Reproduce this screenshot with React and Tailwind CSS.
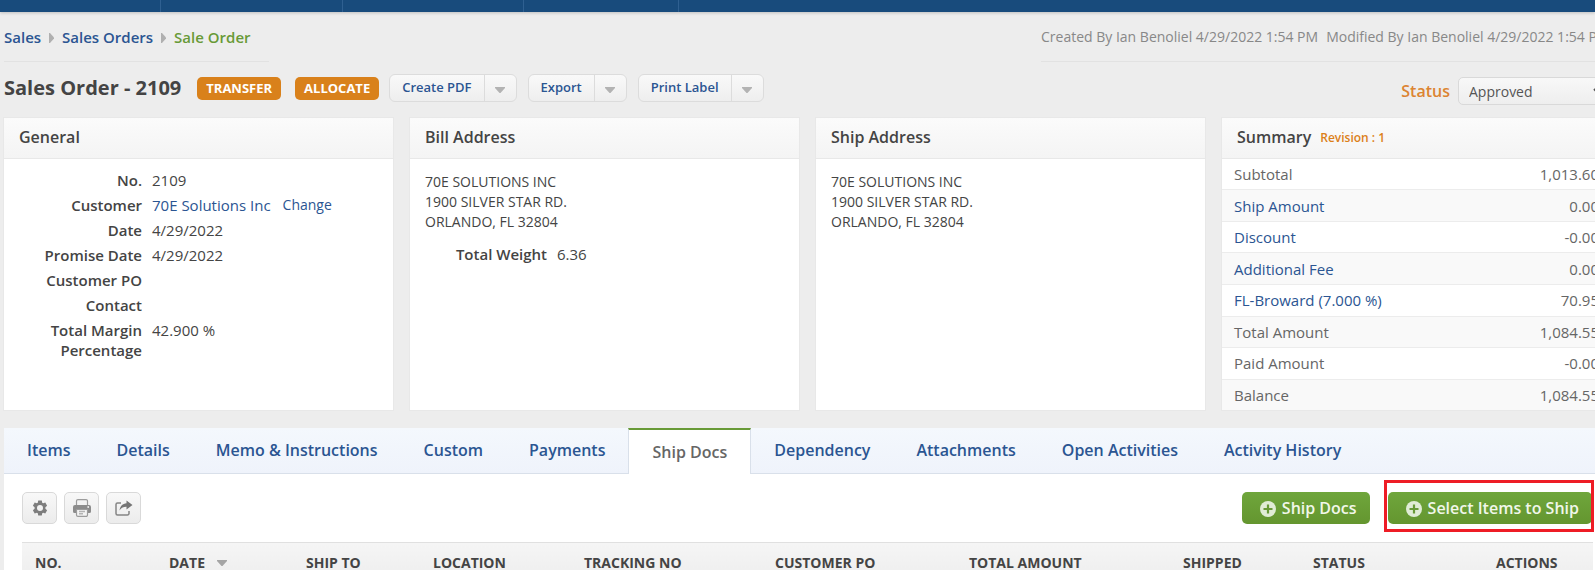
import clsx from 'clsx';

const navWidths = ['w-[161px]', 'w-[182px]', 'w-[181px]', 'w-[155px]'];

const generalFields = [
  { label: 'No.', value: '2109' },
  { label: 'Customer', value: '70E Solutions Inc', link: true },
  { label: 'Date', value: '4/29/2022' },
  { label: 'Promise Date', value: '4/29/2022' },
  { label: 'Customer PO', value: '' },
  { label: 'Contact', value: '' },
  { label: 'Total Margin Percentage', value: '42.900 %' },
];

const summaryRows = [
  { label: 'Subtotal', amount: '1,013.60' },
  { label: 'Ship Amount', amount: '0.00', link: true },
  { label: 'Discount', amount: '-0.00', link: true },
  { label: 'Additional Fee', amount: '0.00', link: true },
  { label: 'FL-Broward (7.000 %)', amount: '70.95', link: true },
  { label: 'Total Amount', amount: '1,084.55' },
  { label: 'Paid Amount', amount: '-0.00' },
  { label: 'Balance', amount: '1,084.55' },
];

const tabs = [
  'Items',
  'Details',
  'Memo & Instructions',
  'Custom',
  'Payments',
  'Ship Docs',
  'Dependency',
  'Attachments',
  'Open Activities',
  'Activity History',
];

const columns = [
  { title: 'NO.', width: 'w-[134px]' },
  { title: 'DATE', width: 'w-[137px]', sorted: true },
  { title: 'SHIP TO', width: 'w-[127px]' },
  { title: 'LOCATION', width: 'w-[151px]' },
  { title: 'TRACKING NO', width: 'w-[191px]' },
  { title: 'CUSTOMER PO', width: 'w-[194px]' },
  { title: 'TOTAL AMOUNT', width: 'w-[214px]' },
  { title: 'SHIPPED', width: 'w-[130px]' },
  { title: 'STATUS', width: 'w-[183px]' },
  { title: 'ACTIONS', width: '' },
];

function Caret({ className }) {
  return (
    <svg viewBox="0 0 10 6" className={clsx('h-[6px] w-[10px]', className)} aria-hidden="true">
      <path d="M0 0h10v1L5.5 6h-1L0 1z" fill="currentColor" />
    </svg>
  );
}

function Chevron() {
  return (
    <svg viewBox="0 0 5 10" className="h-[10px] w-[5px] text-[#b0b0b0]" aria-hidden="true">
      <path d="M0 0h1l4 4.500v1L1 10H0z" fill="currentColor" />
    </svg>
  );
}

function GearIcon() {
  return (
    <svg viewBox="0 0 16 16" className="h-4 w-4" fill="#7d7d7d" aria-hidden="true">
      <path
        fillRule="evenodd"
        d="M6.2 0.5h3.6l.4 2.2 1 .6 2.1-.75 1.8 3.1-1.7 1.5v1.7l1.7 1.5-1.8 3.1-2.1-.75-1 .6-.4 2.2H6.200l-.4-2.200-1-.6-2.100.75-1.800-3.100 1.700-1.500V7.150L.9 5.650l1.800-3.100 2.100.75 1-.6zM8 5a3 3 0 1 0 0 6 3 3 0 0 0 0-6z"
      />
    </svg>
  );
}

function PrinterIcon() {
  return (
    <svg viewBox="0 0 18 18" className="h-[18px] w-[18px]" aria-hidden="true">
      <path d="M3.500 6V2A1.400 1.400 0 0 1 4.900.600h8.200A1.400 1.400 0 0 1 14.500 2v4" fill="#f3f3f3" stroke="#9c9c9c" strokeWidth="1.2" />
      <path d="M2 6h14a2 2 0 0 1 2 2v4.500a1.500 1.500 0 0 1-1.500 1.500h-15A1.500 1.500 0 0 1 0 12.500V8a2 2 0 0 1 2-2z" fill="#8c8c8c" />
      <circle cx="15.200" cy="8" r=".9" fill="#f3f3f3" />
      <path d="M3.500 10.500h11V16a1.400 1.400 0 0 1-1.400 1.400H4.900A1.400 1.400 0 0 1 3.500 16z" fill="#f3f3f3" stroke="#9c9c9c" strokeWidth="1.2" />
      <path d="M6 12.500h6M6 14.800h4" stroke="#b4b4b4" strokeWidth="1.4" />
    </svg>
  );
}

function ShareIcon() {
  return (
    <svg viewBox="0 0 18 16" className="h-4 w-[18px]" aria-hidden="true">
      <path d="M6 3H2.500A1.500 1.500 0 0 0 1 4.500v9A1.500 1.500 0 0 0 2.500 15h10a1.500 1.500 0 0 0 1.500-1.500V11" fill="none" stroke="#858585" strokeWidth="1.5" />
      <path d="M11.500.500 17.500 5l-6 4.500V6.800C8.500 6.700 6.300 7.800 4.500 10.500 4.900 6.500 7.500 3.500 11.500 3.200z" fill="#757575" />
    </svg>
  );
}

function PlusCircle() {
  return (
    <svg viewBox="0 0 16 16" className="mt-0.5 h-4 w-4" aria-hidden="true">
      <circle cx="8" cy="8" r="8" fill="#e0ecd5" />
      <path d="M8 3.500v9M3.500 8h9" stroke="#689a37" strokeWidth="2.2" />
    </svg>
  );
}

function SplitButton({ children }) {
  return (
    <div className="flex h-7 rounded-md border border-[#dcdcdc] bg-linear-to-b from-[#f9f9f9] to-[#eeeeee] text-[#2b5592]">
      <button type="button" className="px-3 text-[13px] font-semibold">
        {children}
      </button>
      <button
        type="button"
        aria-label={`${children} options`}
        className="flex w-8 items-center justify-center border-l border-[#dcdcdc] pt-1"
      >
        <Caret className="h-[5px] w-[9px] text-[#b3b3b3]" />
      </button>
    </div>
  );
}

function Badge({ children }) {
  return (
    <button
      type="button"
      className="h-[23px] rounded-[5px] bg-[#d9811b] px-[9px] text-[13px] leading-[21px] font-bold text-white"
    >
      {children}
    </button>
  );
}

function IconButton({ label, children }) {
  return (
    <button
      type="button"
      aria-label={label}
      className="flex h-8 w-[35px] items-center justify-center rounded-[5px] border border-[#d9d9d9] bg-linear-to-b from-[#f8f8f8] to-[#ececec]"
    >
      {children}
    </button>
  );
}

function GreenButton({ children }) {
  return (
    <button
      type="button"
      className="flex h-8 items-center gap-[6px] rounded-[5px] bg-linear-to-b from-[#6fa63c] to-[#64962f] pr-[13px] pl-[18px] text-base font-semibold text-[#f1f7ea]"
    >
      <PlusCircle />
      {children}
    </button>
  );
}

function Card({ title, children }) {
  return (
    <section className="min-h-[292px] bg-white outline outline-[#e8e8e8]">
      <h2 className="flex h-[41px] items-center border-b border-[#e8e8e8] bg-linear-to-b from-[#fbfbfb] to-[#f4f4f4] px-[15px] pb-0.5 text-base font-semibold">
        {title}
      </h2>
      {children}
    </section>
  );
}

function Address() {
  return (
    <address className="px-[15px] pt-[13px] text-sm leading-5 not-italic">
      70E SOLUTIONS INC
      <br />
      1900 SILVER STAR RD.
      <br />
      ORLANDO, FL 32804
    </address>
  );
}

function PageHeader() {
  return (
    <header className="flex justify-between">
      <nav
        aria-label="Breadcrumb"
        className="flex h-[50px] w-[265px] items-center gap-2 border-b border-[#e2e2e2] pt-0.5 text-[15px] font-semibold whitespace-nowrap text-[#2b5592]"
      >
        <a href="#sales">Sales</a>
        <Chevron />
        <a href="#orders">Sales Orders</a>
        <Chevron />
        <span className="text-[#689a37]">Sale Order</span>
      </nav>
      <div className="flex h-[50px] w-[570px] items-center gap-2 border-b border-[#e2e2e2] text-sm whitespace-nowrap text-[#888]">
        <span>Created By Ian Benoliel 4/29/2022 1:54 PM</span>
        <span>Modified By Ian Benoliel 4/29/2022 1:54 PM</span>
      </div>
    </header>
  );
}

function TitleBar() {
  return (
    <div className="flex items-start justify-between pt-3">
      <div className="flex items-center">
        <h1 className="mr-4 text-xl leading-7 font-bold">Sales Order - 2109</h1>
        <div className="mr-[10px] flex gap-[14px]">
          <Badge>TRANSFER</Badge>
          <Badge>ALLOCATE</Badge>
        </div>
        <div className="flex gap-[11px]">
          <SplitButton>Create PDF</SplitButton>
          <SplitButton>Export</SplitButton>
          <SplitButton>Print Label</SplitButton>
        </div>
      </div>
      <div className="mr-1 flex items-center gap-2 pt-[3px]">
        <label htmlFor="status" className="text-base font-semibold text-[#dc8431]">
          Status
        </label>
        <select
          id="status"
          className="h-7 w-[149px] rounded-[5px] border border-[#d9d9d9] bg-linear-to-b from-[#f8f8f8] to-[#eeeeee] px-[6px] text-sm text-[#555]"
        >
          <option>Approved</option>
        </select>
      </div>
    </div>
  );
}

function Summary() {
  return (
    <Card
      title={
        <>
          Summary
          <span className="ml-[9px] pt-0.5 text-xs text-[#dc7f18]">Revision : 1</span>
        </>
      }
    >
      <table className="h-[251px] w-full text-[15px] leading-5 text-[#666]">
        <tbody>
          {summaryRows.map((row) => (
            <tr key={row.label} className="border-t border-[#ececec] first:border-t-0 even:bg-[#f9f9f9]">
              <th scope="row" className="pl-3 text-left font-normal">
                {row.link ? (
                  <a href="#edit" className="text-[#2b5592]">
                    {row.label}
                  </a>
                ) : (
                  row.label
                )}
              </th>
              <td className="pr-3 text-right">{row.amount}</td>
            </tr>
          ))}
        </tbody>
      </table>
    </Card>
  );
}

function General() {
  return (
    <Card title="General">
      <dl className="grid grid-cols-[126px_1fr] gap-x-[10px] gap-y-[5px] px-3 pt-[11px] text-[15px] leading-5">
        {generalFields.map((field) => (
          <div key={field.label} className="contents">
            <dt className="text-right font-semibold">{field.label}</dt>
            <dd>
              {field.link ? (
                <span className="flex gap-3 text-[#2b5592]">
                  <a href="#customer">{field.value}</a>
                  <a href="#change" className="text-sm leading-5">
                    Change
                  </a>
                </span>
              ) : (
                field.value
              )}
            </dd>
          </div>
        ))}
      </dl>
    </Card>
  );
}

function Tabs() {
  return (
    <div
      role="tablist"
      className="flex h-[46px] border-b border-[#d9e0ea] bg-linear-to-b from-[#f4f8fd] to-[#eff3fb] text-base font-semibold whitespace-nowrap text-[#2b5592]"
    >
      {tabs.map((tab) => {
        const active = tab === 'Ship Docs';
        return (
          <button
            key={tab}
            type="button"
            role="tab"
            aria-selected={active}
            className={clsx(
              'px-[23px]',
              active
                ? '-mb-px border-x border-t-2 border-x-[#d9e0ea] border-t-[#689a37] bg-white text-[#666]'
                : 'pb-0.5',
            )}
          >
            {tab}
          </button>
        );
      })}
    </div>
  );
}

function ShipDocs() {
  return (
    <section className="bg-white px-[18px] pt-[18px]">
      <div className="mb-[18px] flex items-center justify-between">
        <div className="flex gap-[7px]">
          <IconButton label="Settings">
            <GearIcon />
          </IconButton>
          <IconButton label="Print">
            <PrinterIcon />
          </IconButton>
          <IconButton label="Share">
            <ShareIcon />
          </IconButton>
        </div>
        <div className="mr-px flex gap-[18px]">
          <GreenButton>Ship Docs</GreenButton>
          <div className="relative">
            <GreenButton>Select Items to Ship</GreenButton>
            <div className="pointer-events-none absolute -top-3 -right-0.5 -bottom-2 -left-1 border-3 border-[#ee1c25]" />
          </div>
        </div>
      </div>
      <table className="w-full table-fixed border-t border-[#e0e0e0] bg-linear-to-b from-[#f5f5f5] to-[#ededed] text-sm">
        <thead>
          <tr className="h-10">
            {columns.map((column) => (
              <th key={column.title} scope="col" className={clsx('pl-[13px] text-left font-bold', column.width)}>
                <span className="flex items-center gap-3">
                  {column.title}
                  {column.sorted && <Caret className="text-[#a5a5a5]" />}
                </span>
              </th>
            ))}
          </tr>
        </thead>
      </table>
    </section>
  );
}

export default function App() {
  return (
    <div className="h-screen overflow-hidden bg-[#ededed] font-['Open_Sans',sans-serif] text-[#444]">
      <div className="flex h-3 bg-[#184b7c] shadow-[0_1px_3px_rgba(0,0,0,0.2)]">
        {navWidths.map((width) => (
          <div key={width} className={clsx('border-r border-[#2f6091]', width)} />
        ))}
      </div>
      {/* The sheet runs past the right edge of the window */}
      <main className="-mr-4 pl-1">
        <PageHeader />
        <TitleBar />
        <div className="mt-[13px] grid grid-cols-4 gap-[17px]">
          <General />
          <Card title="Bill Address">
            <Address />
            <dl className="flex gap-[10px] px-[15px] pt-3 text-[15px] leading-5">
              <dt className="w-[122px] text-right font-semibold">Total Weight</dt>
              <dd>6.36</dd>
            </dl>
          </Card>
          <Card title="Ship Address">
            <Address />
          </Card>
          <Summary />
        </div>
        <div className="mt-[18px]">
          <Tabs />
          <ShipDocs />
        </div>
      </main>
    </div>
  );
}
